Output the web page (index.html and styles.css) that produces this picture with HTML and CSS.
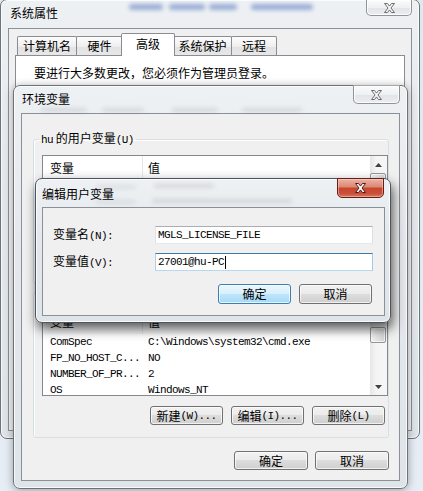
FILE: index.html
```html
<!DOCTYPE html>
<html lang="zh-CN">
<head>
<meta charset="utf-8">
<title>系统属性</title>
<link rel="stylesheet" href="styles.css">
</head>
<body>
<div class="desk">

  <div class="win w1">
    <div class="tb">
      <span class="ttl">系统属性</span>
      <div class="glare">
        <span class="bl b1"></span><span class="bl b2"></span><span class="bl b3"></span><span class="bl b4"></span>
      </div>
      <div class="close">
        <svg width="13" height="10" viewBox="0 0 13 10"><path d="M1.5 .5h3l2 2.6 2-2.6h3L8 5l3.5 4.5h-3l-2-2.6-2 2.6h-3L5 5z"/></svg>
      </div>
    </div>
    <div class="client">
      <div class="tabs">
        <div class="tab tw1">计算机名</div>
        <div class="tab tw2">硬件</div>
        <div class="tab sel">高级</div>
        <div class="tab tw4">系统保护</div>
        <div class="tab tw5">远程</div>
      </div>
      <div class="panel">
        <p class="note">要进行大多数更改，您必须作为管理员登录。</p>
      </div>
    </div>
  </div>

  <div class="win w2">
    <div class="tb">
      <span class="ttl">环境变量</span>
      <div class="glare">
        <span class="gr r1"></span><span class="gr r2"></span><span class="gr r3"></span><span class="gr r4"></span>
      </div>
      <div class="close">
        <svg width="13" height="10" viewBox="0 0 13 10"><path d="M1.5 .5h3l2 2.6 2-2.6h3L8 5l3.5 4.5h-3l-2-2.6-2 2.6h-3L5 5z"/></svg>
      </div>
    </div>
    <div class="client">
      <fieldset class="grp g1">
        <legend><span class="m">hu</span> 的用户变量<span class="m">(U)</span></legend>
        <div class="list">
          <div class="cols">
            <div class="hdr"><div class="c1">变量</div><div class="c2">值</div></div>
            <div class="row"></div>
            <div class="row"></div>
            <div class="row"></div>
          </div>
          <div class="sb">
            <div class="arr"><svg width="7" height="4" viewBox="0 0 7 4"><path d="M0 4h7L3.5 0z"/></svg></div>
            <div class="thumb"></div>
            <div class="sp"></div>
            <div class="arr"><svg width="7" height="4" viewBox="0 0 7 4"><path d="M0 0h7L3.5 4z"/></svg></div>
          </div>
        </div>
        <div class="brow">
          <button class="btn" aria-label="新建"></button>
          <button class="btn" aria-label="编辑"></button>
          <button class="btn" aria-label="删除"></button>
        </div>
      </fieldset>

      <fieldset class="grp g2">
        <legend>系统变量<span class="m">(S)</span></legend>
        <div class="list">
          <div class="cols">
            <div class="hdr"><div class="c1">变量</div><div class="c2">值</div></div>
            <div class="row"><div class="c1 m">ComSpec</div><div class="c2 m">C:\Windows\system32\cmd.exe</div></div>
            <div class="row"><div class="c1 m">FP_NO_HOST_C...</div><div class="c2 m">NO</div></div>
            <div class="row"><div class="c1 m">NUMBER_OF_PR...</div><div class="c2 m">2</div></div>
            <div class="row"><div class="c1 m">OS</div><div class="c2 m">Windows_NT</div></div>
          </div>
          <div class="sb">
            <div class="arr"><svg width="7" height="4" viewBox="0 0 7 4"><path d="M0 4h7L3.5 0z"/></svg></div>
            <div class="thumb"></div>
            <div class="sp"></div>
            <div class="arr"><svg width="7" height="4" viewBox="0 0 7 4"><path d="M0 0h7L3.5 4z"/></svg></div>
          </div>
        </div>
        <div class="brow">
          <button class="btn">新建<span class="m">(W)...</span></button>
          <button class="btn">编辑<span class="m">(I)...</span></button>
          <button class="btn">删除<span class="m">(L)</span></button>
        </div>
      </fieldset>

      <div class="okrow">
        <button class="btn wide">确定</button>
        <button class="btn wide">取消</button>
      </div>
    </div>
  </div>

  <div class="win w3">
    <div class="tb">
      <span class="ttl">编辑用户变量</span>
      <div class="glare">
        <span class="gr s1"></span><span class="gr s2"></span><span class="gr s3"></span><span class="gr s4"></span>
      </div>
      <div class="close red">
        <svg width="13" height="10" viewBox="0 0 13 10"><path d="M1.5 .5h3l2 2.6 2-2.6h3L8 5l3.5 4.5h-3l-2-2.6-2 2.6h-3L5 5z"/></svg>
      </div>
    </div>
    <div class="client">
      <div class="form">
        <label class="lbl">变量名<span class="m">(N):</span></label>
        <div class="inp"><span class="m">MGLS_LICENSE_FILE</span></div>
        <label class="lbl">变量值<span class="m">(V):</span></label>
        <div class="inp focus"><span class="m">27001@hu-PC</span><span class="caret"></span></div>
      </div>
      <div class="drow">
        <button class="btn def">确定</button>
        <button class="btn">取消</button>
      </div>
    </div>
  </div>

</div>
</body>
</html>
```
FILE: styles.css
```css
html, body {
  margin: 0;
  padding: 0;
}
body {
  width: 423px;
  height: 491px;
  overflow: hidden;
  background: linear-gradient(180deg, #dfe7ef 0%, #e6edf4 100%);
  font: 12px/16px "Noto Sans CJK SC", "Noto Sans", sans-serif;
  color: #000;
}
.desk {
  position: relative;
  width: 423px;
  height: 491px;
}

.m {
  font-family: "Liberation Mono", "Noto Sans CJK SC", monospace;
  font-size: 11px;
  letter-spacing: -0.6px;
}

/* ---------- window chrome ---------- */
.win {
  position: absolute;
  box-sizing: border-box;
  display: flex;
  flex-direction: column;
  border: 1px solid #6b727a;
  border-radius: 7px;
  background: linear-gradient(180deg, #eef1f4 0%, #e4e8ec 40%, #dfe4e9 100%);
  box-shadow: inset 0 0 0 1px rgba(255, 255, 255, 0.75);
}
.w1 { left: 0; top: -1px; width: 420px; height: 440px; }
.w2 { left: 13px; top: 85px; width: 395px; height: 404px; box-shadow: inset 0 0 0 1px rgba(255,255,255,.75), 0 1px 9px rgba(0, 0, 0, 0.35); }
.w3 { left: 35px; top: 178px; width: 356px; height: 145px; border-color: #4d545c; box-shadow: inset 0 0 0 1px rgba(255,255,255,.8), 2px 6px 12px rgba(0, 0, 0, 0.65); }

.tb {
  position: relative;
  display: flex;
  align-items: center;
  flex: none;
}
.w1 .tb { height: 28px; padding-left: 9px; }
.w2 .tb { height: 27px; padding-left: 8px; }
.w3 .tb { height: 28px; padding-left: 6px; }
.ttl {
  position: relative;
  z-index: 1;
  white-space: nowrap;
}
.w1 .ttl { margin-bottom: 2px; }
.w2 .ttl { margin-bottom: 2px; }
.w3 .ttl { margin-top: 1px; }

.glare {
  position: absolute;
  inset: 0;
  pointer-events: none;
}
.bl, .gr {
  position: absolute;
  border-radius: 4px;
  filter: blur(2px);
}
.bl { background: rgba(70, 105, 185, 0.5); height: 6px; top: 4px; }
.b1 { left: 128px; width: 34px; }
.b2 { left: 168px; width: 36px; }
.b3 { left: 208px; width: 28px; }
.b4 { left: 250px; width: 62px; }
.gr { background: rgba(110, 110, 110, 0.18); height: 4px; }
.r1 { left: 27px; width: 46px; top: 22px; }
.r2 { left: 88px; width: 42px; top: 22px; }
.r3 { left: 158px; width: 46px; top: 22px; }
.r4 { left: 228px; width: 60px; top: 22px; }
.s1 { left: 60px; width: 40px; top: 6px; background: rgba(110,110,110,.12); }
.s2 { left: 118px; width: 60px; top: 5px; }
.s3 { left: 60px; width: 40px; top: 21px; background: rgba(110,110,110,.12); }
.s4 { left: 116px; width: 140px; top: 20px; }

.close {
  position: relative;
  z-index: 2;
  align-self: flex-start;
  margin-left: auto;
  margin-top: -1px;
  box-sizing: border-box;
  width: 47px;
  display: flex;
  align-items: center;
  justify-content: center;
  border: 1px solid #8d949b;
  border-top-color: #a0a6ac;
  border-radius: 0 0 5px 5px;
  background: linear-gradient(180deg, #fbfbfb 0%, #eef0f2 50%, #e2e5e8 51%, #ebedef 100%);
  box-shadow: inset 0 0 0 1px rgba(255, 255, 255, 0.8);
}
.close svg path { fill: #f6f6f6; stroke: #6c6c6c; stroke-width: 1; stroke-linejoin: round; }
.w1 .close { width: 46px; height: 17px; margin-right: 7px; }
.w2 .close { height: 19px; margin-right: 7px; }
.w3 .close { height: 20px; margin-right: 6px; }
.close.red {
  border-color: #6a1e13;
  background: linear-gradient(180deg, #eab3a6 0%, #dc8671 45%, #c8452d 50%, #c9503a 80%, #d9775f 100%);
  box-shadow: inset 0 0 0 1px rgba(255, 220, 210, 0.45);
}
.close.red svg path { fill: #ffffff; stroke: #4f1c13; }

.client {
  flex: 1;
  min-height: 0;
  display: flex;
  flex-direction: column;
  border: 1px solid #8a9098;
  background: #f0f0f0;
}
.w1 .client, .w2 .client { margin: 0 7px 7px 7px; }
.w3 .client { margin: 0 5px 6px 6px; }

/* ---------- tabs (系统属性) ---------- */
.tabs {
  display: flex;
  align-items: flex-end;
  height: 23px;
  padding: 4px 0 0 8px;
}
.tab {
  box-sizing: border-box;
  height: 20px;
  border: 1px solid #898c95;
  border-bottom: none;
  border-radius: 2px 2px 0 0;
  background: linear-gradient(180deg, #fdfdfd 0%, #eeeeee 50%, #e2e2e2 51%, #e8e8e8 100%);
  text-align: center;
  line-height: 18px;
  margin-left: -1px;
  white-space: nowrap;
}
.tw1 { width: 60px; margin-left: 0; }
.tw2 { width: 47px; }
.sel {
  position: relative;
  z-index: 1;
  width: 54px;
  height: 23px;
  margin-left: -2px;
  margin-right: -1px;
  background: #fff;
  line-height: 20px;
}
.tw4 { width: 59px; }
.tw5 { width: 46px; }
.panel {
  position: relative;
  flex: 1;
  margin: -1px 6px 6px 6px;
  border: 1px solid #898c95;
  background: #fff;
}
.note {
  margin: 9px 0 0 18px;
  white-space: nowrap;
}

/* ---------- group boxes ---------- */
.grp {
  margin: 0 10px 0 11px;
  padding: 0 3px 12px 8px;
  border: 1px solid #d5dfe5;
  border-radius: 3px;
  box-shadow: inset 1px 1px 0 #fff;
  min-width: 0;
}
.g1 { margin-top: 17px; }
.g2 { margin-top: 0; }
.grp legend {
  padding: 0 2px;
  margin-left: -3px;
  line-height: 14px;
  white-space: nowrap;
}
.g1 .list { margin-top: 8px; }
.g2 .list { margin-top: 9px; }

.list {
  box-sizing: border-box;
  height: 87px;
  margin-right: -3px;
  display: grid;
  grid-template-columns: 1fr 17px;
  border: 1px solid #828790;
  background: #fff;
  overflow: hidden;
}
.cols { overflow: hidden; min-width: 0; }
.hdr {
  display: flex;
  align-items: center;
  height: 24px;
  background: linear-gradient(180deg, #ffffff 0%, #ffffff 55%, #f6f7f9 100%);
}
.row {
  display: flex;
  align-items: center;
  height: 16px;
}
.c1 {
  box-sizing: border-box;
  width: 100px;
  flex: none;
  padding-left: 7px;
  white-space: nowrap;
  overflow: hidden;
}
.hdr .c1 { border-right: 1px solid #e3e5e8; height: 24px; line-height: 24px; }
.c2 {
  padding-left: 5px;
  white-space: nowrap;
}
.sb {
  display: flex;
  flex-direction: column;
  background: linear-gradient(90deg, #e6e6e6 0%, #f4f4f4 35%, #f6f6f6 100%);
}
.arr {
  height: 17px;
  flex: none;
  display: flex;
  align-items: center;
  justify-content: center;
}
.arr svg path { fill: #404040; }
.thumb {
  flex: none;
  height: 16px;
  box-sizing: border-box;
  margin: 0 1px 0 0;
  border: 1px solid #979797;
  border-radius: 2px;
  background: linear-gradient(90deg, #f4f4f4 0%, #e4e4e4 50%, #d6d6d6 100%);
  box-shadow: inset 0 0 0 1px rgba(255, 255, 255, 0.6);
}
.sp { flex: 1; }

/* ---------- buttons ---------- */
.btn {
  box-sizing: border-box;
  width: 73px;
  height: 19px;
  padding: 0;
  display: flex;
  align-items: center;
  justify-content: center;
  border: 1px solid #707070;
  border-radius: 3px;
  background: linear-gradient(180deg, #f2f2f2 0%, #ebebeb 48%, #dddddd 50%, #cfcfcf 100%);
  box-shadow: inset 0 0 0 1px rgba(255, 255, 255, 0.7);
  font: 12px/16px "Noto Sans CJK SC", "Noto Sans", sans-serif;
  color: #000;
  white-space: nowrap;
}
.btn.wide { width: 74px; }
.btn.def {
  border-color: #3c7fb1;
  background: linear-gradient(180deg, #eaf6fd 0%, #d9f0fc 48%, #bee6fd 50%, #a7d9f5 100%);
}
.brow {
  display: flex;
  justify-content: flex-end;
  gap: 8px;
  margin-top: 10px;
}
.okrow {
  display: flex;
  justify-content: flex-end;
  gap: 7px;
  margin: 13px 10px 0 0;
}

/* ---------- edit dialog ---------- */
.form {
  display: grid;
  grid-template-columns: 102px 218px;
  grid-auto-rows: 18px;
  row-gap: 9px;
  align-items: center;
  padding: 18px 0 0 10px;
}
.lbl { white-space: nowrap; }
.inp {
  box-sizing: border-box;
  height: 18px;
  display: flex;
  align-items: center;
  padding-left: 2px;
  border: 1px solid;
  border-color: #abadb3 #dbdfe6 #e3e9ef #e2e3ea;
  background: #fff;
  white-space: nowrap;
}
.inp.focus { border-color: #3d7bad #a4c9e3 #b7d9ed #b5cfe7; }
.caret {
  width: 1px;
  height: 13px;
  background: #000;
  margin-left: 1px;
}
.drow {
  display: flex;
  justify-content: flex-end;
  gap: 8px;
  margin: 13px 12px 0 0;
}
.drow .btn { height: 20px; }
```
